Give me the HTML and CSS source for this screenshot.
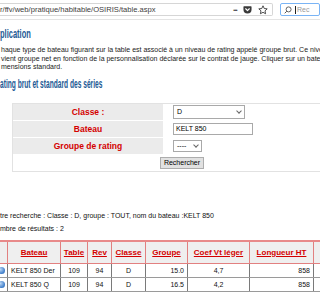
FILE: index.html
```html
<!DOCTYPE html>
<html lang="fr">
<head>
<meta charset="utf-8">
<title>OSIRIS table</title>
<link rel="stylesheet" href="styles.css">
</head>
<body>
<div class="toolbar">
  <div class="urlbar">
    <span class="url">r/ffv/web/pratique/habitable/OSIRIS/table.aspx</span>
    <span class="tbicons">
      <span class="dots">•••</span>
      <svg class="pocket" width="9" height="9" viewBox="0 0 10 10"><path d="M1 1.5h8a.5.5 0 0 1 .5.5v3a4.5 4.5 0 0 1-9 0V2a.5.5 0 0 1 .5-.5z" fill="#3a3a3a"/><path d="M3 4.2l2 2 2-2" fill="none" stroke="#fff" stroke-width="1.3" stroke-linecap="round" stroke-linejoin="round"/></svg>
      <svg class="star" width="10" height="10" viewBox="0 0 10 10"><path d="M5 .8l1.25 2.7 2.95.35-2.2 2 .6 2.9L5 7.3 2.4 8.75l.6-2.9-2.2-2 2.95-.35z" fill="none" stroke="#3a3a3a" stroke-width="0.9" stroke-linejoin="round"/></svg>
    </span>
  </div>
  <div class="search">
    <svg width="8" height="8" viewBox="0 0 8 8"><circle cx="4.6" cy="3.4" r="2.5" fill="none" stroke="#555" stroke-width="0.9"/><path d="M2.8 5.2L.7 7.3" stroke="#555" stroke-width="1"/></svg>
    <span class="caret"></span><span class="ph">Rec</span>
  </div>
</div>

<div class="page">
  <h2 class="title first"><span>plication</span></h2>
  <p class="intro">haque type de bateau figurant sur la table est associé à un niveau de rating appelé groupe brut. Ce niveau<br>vient groupe net en fonction de la personnalisation déclarée sur le contrat de jauge. Cliquer sur un bateau<br>mensions standard.</p>
  <h2 class="title second"><span>ating brut et standard des séries</span></h2>

  <div class="formbox">
    <div class="lbl">Classe :</div>
    <div class="val"><span class="select wide"><span>D</span><i class="chev"></i></span></div>
    <div class="lbl">Bateau</div>
    <div class="val"><span class="input">KELT 850</span></div>
    <div class="lbl">Groupe de rating</div>
    <div class="val"><span class="select small"><span>----</span><i class="chev"></i></span></div>
    <div class="btnrow"><span class="button">Rechercher</span></div>
  </div>

  <p class="info first">tre recherche : Classe : D, groupe : TOUT, nom du bateau :KELT 850</p>
  <p class="info">mbre de résultats : 2</p>

  <div class="results-wrap">
    <table class="results">
      <colgroup>
        <col class="c0"><col class="c1"><col class="c2"><col class="c3"><col class="c4"><col class="c5"><col class="c6"><col class="c7"><col class="c8">
      </colgroup>
      <thead>
        <tr><th></th><th><u>Bateau</u></th><th><u>Table</u></th><th><u>Rev</u></th><th><u>Classe</u></th><th><u>Groupe</u></th><th><u>Coef Vt léger</u></th><th><u>Longueur HT</u></th><th><u>Tirant</u></th></tr>
      </thead>
      <tbody>
        <tr><td class="ic"><span class="dot"></span></td><td class="name">KELT 850 Der</td><td>109</td><td>94</td><td>D</td><td class="r">15.0</td><td>4,7</td><td class="r">858</td><td></td></tr>
        <tr><td class="ic"><span class="dot"></span></td><td class="name">KELT 850 Q</td><td>109</td><td>94</td><td>D</td><td class="r">16.5</td><td>4,2</td><td class="r">858</td><td></td></tr>
      </tbody>
    </table>
  </div>
</div>
</body>
</html>
```

FILE: styles.css
```css
html, body {
  margin: 0;
  padding: 0;
}
body {
  width: 320px;
  height: 300px;
  overflow: hidden;
  background: #fff;
  font-family: "Liberation Sans", Arial, sans-serif;
  color: #111;
}

/* browser toolbar */
.toolbar {
  display: flex;
  align-items: center;
  gap: 7px;
  height: 19px;
  border-bottom: 1px solid #e4e4e4;
  background: #fff;
}
.urlbar {
  display: flex;
  align-items: center;
  justify-content: space-between;
  margin-left: -10px;
  width: 298px;
  height: 13px;
  border: 1px solid #d6d6d6;
  border-left: none;
  border-radius: 0 2px 2px 0;
  padding-right: 4px;
  box-sizing: border-box;
}
.url {
  padding-left: 10px;
  font-size: 7.6px;
  color: #3c3c3c;
  white-space: nowrap;
}
.tbicons {
  display: flex;
  align-items: center;
  gap: 6px;
}
.dots {
  font-size: 5px;
  letter-spacing: -0.5px;
  color: #333;
}
.pocket, .star { display: block; }
.search {
  display: flex;
  align-items: center;
  gap: 3px;
  width: 40px;
  height: 13px;
  box-sizing: border-box;
  border: 1px solid #7ab4f5;
  border-radius: 2px;
  padding-left: 3px;
  flex-shrink: 0;
}
.search svg { display: block; }
.caret {
  width: 1px;
  height: 8px;
  background: #222;
}
.ph {
  font-size: 7px;
  color: #9a9a9a;
  margin-left: -2px;
}

/* page */
.page {
  white-space: nowrap;
}
.title {
  margin: 8px 0 0;
  font-family: "Liberation Sans", sans-serif;
  font-weight: bold;
  font-size: 12.5px;
  line-height: 13px;
  color: #1d5a94;
}
.title span {
  display: inline-block;
  transform-origin: 0 50%;
}
.title.first span { transform: scaleX(0.6); }
.title.second {
  margin-top: 6px;
}
.title.second span { transform: scaleX(0.53); }
.intro {
  margin: 5px 0 0 1px;
  font-size: 7px;
  line-height: 8.5px;
  color: #222;
}

.formbox {
  display: grid;
  grid-template-columns: 150px 188px;
  grid-auto-rows: 16px;
  row-gap: 1px;
  margin: 12px 0 0 12px;
  width: 339px;
  border: 1px solid #e2e2e2;
}
.lbl {
  display: flex;
  align-items: center;
  justify-content: center;
  background: #ebebeb;
  color: #d40000;
  font-weight: bold;
  font-size: 8.5px;
}
.val {
  display: flex;
  align-items: center;
  padding-left: 10px;
}
.select, .input {
  display: flex;
  align-items: center;
  box-sizing: border-box;
  border: 1px solid #a9a9a9;
  background: #fff;
  font-size: 7px;
  color: #000;
  padding: 0 3px;
}
.select {
  justify-content: space-between;
  height: 14px;
}
.select.wide { width: 72px; }
.select.small { width: 29px; height: 12px; }
.input {
  width: 80px;
  height: 12px;
  padding-left: 2px;
}
.chev {
  width: 3px;
  height: 3px;
  border-right: 1px solid #666;
  border-bottom: 1px solid #666;
  transform: rotate(45deg);
  margin-top: -2px;
}
.btnrow {
  grid-column: 1 / 3;
  display: flex;
  align-items: center;
  justify-content: center;
  background: #fff;
}
.button {
  display: inline-flex;
  align-items: center;
  height: 12px;
  padding: 0 3px;
  box-sizing: border-box;
  border: 1px solid #adadad;
  background: #e1e1e1;
  font-size: 7px;
  color: #000;
}

.info {
  margin: 0;
  font-size: 7px;
  line-height: 9px;
  color: #111;
}
.info.first {
  margin-top: 39px;
  margin-bottom: 4px;
}

.results-wrap {
  margin: 7px 0 0 -13px;
}
.results {
  border-collapse: collapse;
  table-layout: fixed;
  width: 368px;
}
.c0 { width: 20px; }
.c1 { width: 53px; }
.c2 { width: 27px; }
.c3 { width: 24px; }
.c4 { width: 34px; }
.c5 { width: 42px; }
.c6 { width: 62px; }
.c7 { width: 64px; }
.c8 { width: 42px; }
.results th {
  height: 21px;
  padding: 0;
  background: #efefef;
  border: 1px solid #e28080;
  border-top: 2px solid #e88a8a;
  color: #d40000;
  font-size: 8px;
  font-weight: bold;
  text-align: center;
  overflow: hidden;
}
.results td {
  height: 13px;
  padding: 0 3px;
  border: 1px solid #7a7a7a;
  border-top-color: #9a9a9a;
  border-bottom-color: #9a9a9a;
  font-size: 7px;
  text-align: center;
  overflow: hidden;
}
.results td.name { text-align: left; }
.results td.r { text-align: right; }
.results td.ic {
  text-align: right;
  padding: 0 2px 0 0;
}
.dot {
  display: inline-block;
  width: 7px;
  height: 7px;
  border-radius: 50%;
  background: radial-gradient(circle at 35% 35%, #bcd8f5, #3d7cc9 70%, #2a5e9e);
  vertical-align: middle;
}
```
